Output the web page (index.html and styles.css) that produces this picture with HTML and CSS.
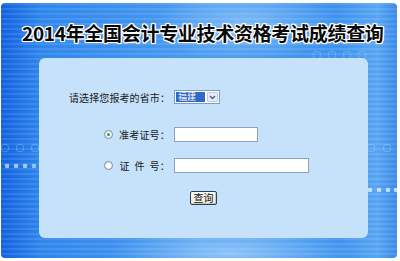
FILE: index.html
```html
<!DOCTYPE html>
<html lang="zh-CN">
<head>
<meta charset="utf-8">
<title>2014年全国会计专业技术资格考试成绩查询</title>
<link rel="stylesheet" href="styles.css">
</head>
<body>
<div class="frame">
  <h1 class="title">2014年全国会计专业技术资格考试成绩查询</h1>
  <div class="panel">
    <div class="row row-province">
      <span class="label">请选择您报考的省市：</span>
      <div class="select">
        <span class="select-value">福建</span>
        <span class="select-arrow">
          <svg width="7" height="5" viewBox="0 0 7 5"><path d="M1 1 L3.5 3.5 L6 1" fill="none" stroke="#4a5a80" stroke-width="1.3"/></svg>
        </span>
      </div>
    </div>
    <div class="row row-exam">
      <span class="label"><span class="radio checked"></span><span class="radio-text">准考证号：</span></span>
      <span class="input input-short"></span>
    </div>
    <div class="row row-id">
      <span class="label"><span class="radio"></span><span class="radio-text">证&nbsp;&nbsp;件&nbsp;&nbsp;号：</span></span>
      <span class="input input-long"></span>
    </div>
    <div class="row row-btn">
      <span class="button">查询</span>
    </div>
  </div>
</div>
</body>
</html>
```
FILE: styles.css
```css
html, body {
  margin: 0;
  padding: 0;
  background: #ffffff;
  width: 400px;
  height: 261px;
  overflow: hidden;
}
body {
  padding: 3px 0 0 1px;
  box-sizing: border-box;
  font-family: "Noto Sans CJK SC", "Noto Sans", sans-serif;
}
.frame {
  width: 396px;
  height: 255px;
  border-radius: 4px;
  box-sizing: border-box;
  display: flex;
  flex-direction: column;
  background:
    radial-gradient(circle at 6px 163px, rgba(255,255,255,0.6) 0 2px, transparent 2.6px),
    radial-gradient(circle at 15px 163px, rgba(255,255,255,0.6) 0 2px, transparent 2.6px),
    radial-gradient(circle at 24px 163px, rgba(255,255,255,0.6) 0 2px, transparent 2.6px),
    radial-gradient(circle at 33px 163px, rgba(255,255,255,0.5) 0 2px, transparent 2.6px),
    radial-gradient(circle at 4px 145px, transparent 0 3px, rgba(255,255,255,0.2) 3px 4px, transparent 4.6px),
    radial-gradient(circle at 19px 145px, transparent 0 3px, rgba(255,255,255,0.2) 3px 4px, transparent 4.6px),
    radial-gradient(circle at 34px 145px, transparent 0 3px, rgba(255,255,255,0.2) 3px 4px, transparent 4.6px),
    radial-gradient(circle at 369px 187px, rgba(255,255,255,0.65) 0 2px, transparent 2.6px),
    radial-gradient(circle at 378px 187px, rgba(255,255,255,0.65) 0 2px, transparent 2.6px),
    radial-gradient(circle at 387px 187px, rgba(255,255,255,0.65) 0 2px, transparent 2.6px),
    radial-gradient(circle at 395px 187px, rgba(255,255,255,0.65) 0 2px, transparent 2.6px),
    radial-gradient(circle at 370px 145px, transparent 0 3px, rgba(255,255,255,0.2) 3px 4px, transparent 4.6px),
    radial-gradient(circle at 386px 145px, transparent 0 3px, rgba(255,255,255,0.2) 3px 4px, transparent 4.6px),
    radial-gradient(circle at 316px 52px, transparent 0 3px, rgba(255,255,255,0.18) 3px 4px, transparent 4.6px),
    radial-gradient(circle at 331px 52px, transparent 0 3px, rgba(255,255,255,0.18) 3px 4px, transparent 4.6px),
    radial-gradient(circle at 346px 52px, transparent 0 3px, rgba(255,255,255,0.18) 3px 4px, transparent 4.6px),
    radial-gradient(circle at 361px 52px, transparent 0 3px, rgba(255,255,255,0.18) 3px 4px, transparent 4.6px),
    radial-gradient(ellipse 90px 40px at 245px 20px, rgba(190,225,255,0.45), transparent),
    radial-gradient(ellipse 120px 30px at 230px 250px, rgba(200,230,255,0.55), transparent),
    repeating-linear-gradient(180deg, rgba(255,255,255,0.10) 0 2px, transparent 2px 5px),
    linear-gradient(90deg, #1262e0 0%, #2f86ec 10%, #4a9cf0 50%, #3d92ee 85%, #58a6f2 95%, #3b8ae8 100%);
}
.title {
  margin: 0;
  height: 55px;
  box-sizing: border-box;
  padding: 20px 0 0 21px;
  font-size: 19px;
  line-height: 19px;
  font-weight: 700;
  color: #0a0a0a;
  white-space: nowrap;
  letter-spacing: -0.3px;
  text-shadow:
    1px 0 0 #fff, -1px 0 0 #fff, 0 1px 0 #fff, 0 -1px 0 #fff,
    1px 1px 0 #fff, -1px -1px 0 #fff, 1px -1px 0 #fff, -1px 1px 0 #fff,
    0 0 3px rgba(255,255,255,0.9);
}
.panel {
  margin-left: 38px;
  width: 329px;
  height: 180px;
  background: #c6e2fa;
  border-radius: 6px;
  box-sizing: border-box;
  padding-top: 31px;
  display: flex;
  flex-direction: column;
  color: #1a1a1a;
  font-size: 10px;
}
.row {
  display: grid;
  grid-template-columns: 131px auto;
  column-gap: 4px;
  align-items: center;
  height: 16px;
}
.row-exam { margin-top: 21px; }
.row-id { margin-top: 15px; }
.row-btn {
  margin-top: 17px;
  display: flex;
  justify-content: flex-start;
  padding-left: 151px;
}
.label {
  display: flex;
  justify-content: flex-end;
  align-items: center;
  white-space: nowrap;
  letter-spacing: 0.2px;
}
.row-province .label { letter-spacing: 0.1px; }
.radio {
  width: 9px;
  height: 9px;
  box-sizing: border-box;
  border: 1px solid #7d8ea6;
  border-radius: 50%;
  background: radial-gradient(circle, #ffffff 30%, #dde4ee 100%);
  margin-right: 6px;
  display: flex;
  align-items: center;
  justify-content: center;
}
.radio.checked::after {
  content: "";
  width: 3px;
  height: 3px;
  border-radius: 50%;
  background: #2f9a2f;
}
.select {
  width: 46px;
  height: 14px;
  box-sizing: border-box;
  border: 1px solid #7f9db9;
  background: #ffffff;
  display: flex;
  align-items: stretch;
  padding: 1px;
  gap: 2px;
}
.select-value {
  width: 29px;
  background: #316ac5;
  color: #ffffff;
  font-size: 9px;
  line-height: 10px;
  padding-left: 2px;
  box-sizing: border-box;
}
.select-arrow {
  flex: 1;
  background: #e4ecfa;
  border: 1px solid #b9c9e6;
  border-radius: 1px;
  display: flex;
  align-items: center;
  justify-content: center;
}
.input {
  height: 15px;
  box-sizing: border-box;
  border: 1px solid #8fa4bc;
  background: #ffffff;
  display: block;
}
.input-short { width: 84px; }
.input-long { width: 135px; }
.button {
  width: 27px;
  height: 14px;
  box-sizing: border-box;
  border: 1px solid #2c3e55;
  border-radius: 2px;
  background: linear-gradient(#fbfaf4, #ece9dc);
  box-shadow: inset -1px -1px 0 #cdc8b4;
  font-size: 10px;
  line-height: 12px;
  text-align: center;
  color: #111;
}
```
